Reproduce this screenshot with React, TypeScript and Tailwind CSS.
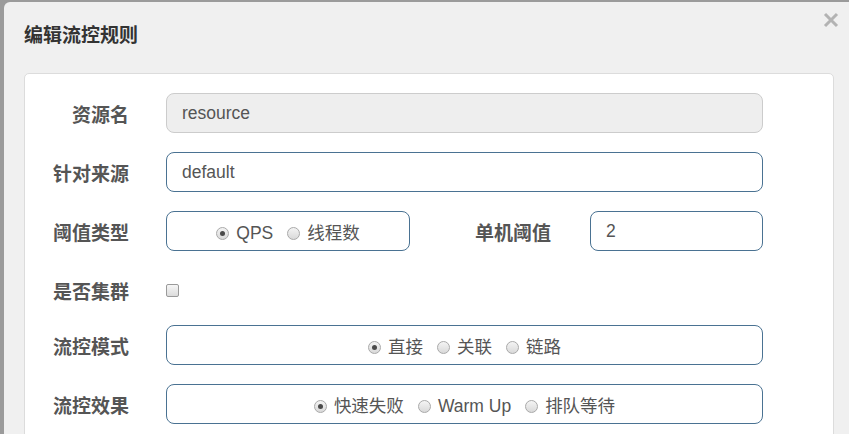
import React from "react";

const FONT = { fontFamily: '"Liberation Sans", Arial, "Noto Sans CJK SC", sans-serif' };

function Radio({ checked, label }: { checked?: boolean; label: string }) {
  return (
    <label className="flex items-center gap-[7px]">
      <span className="w-[13px] h-[13px] rounded-full border border-[#a9a9a9] bg-gradient-to-b from-[#f4f4f4] to-[#d9d9d9] flex items-center justify-center">
        {checked && <span className="w-[5px] h-[5px] rounded-full bg-[#4a4a4a]" />}
      </span>
      <span>{label}</span>
    </label>
  );
}

function Label({ children, className = "" }: { children: React.ReactNode; className?: string }) {
  return (
    <div className={`text-[19px] font-bold text-[#555] text-right pt-[6px] ${className}`}>{children}</div>
  );
}

const boxCls = "h-[40px] rounded-[8px] border border-[#4a7292] bg-white flex items-center text-[17.5px] text-[#555]";

export default function App() {
  return (
    <div className="w-[849px] h-[434px] overflow-hidden bg-[#9b9b9b] pt-[2px] pl-[4px]" style={FONT}>
      <div className="h-[440px] bg-[#f0f0f0] rounded-tl-[6px] relative">
        <div className="h-[71px] pl-[20px] pt-[20px] text-[19px] font-bold text-[#333]">编辑流控规则</div>
        <button className="absolute right-[10px] top-[10px] w-[16px] h-[16px]">
          <svg viewBox="0 0 16 16" className="w-[16px] h-[16px]">
            <path d="M2 2 L14 14 M14 2 L2 14" stroke="#b3b3b3" strokeWidth="3" />
          </svg>
        </button>
        <div className="ml-[20px] w-[810px] h-[380px] bg-white border border-[#dcdcdc] rounded-[5px] pt-[19px]">
          <div className="flex items-center h-[40px]">
            <Label className="w-[104px]">资源名</Label>
            <div className="ml-[37px] w-[597px] h-[40px] rounded-[8px] border border-[#cccccc] bg-[#eeeeee] flex items-center pl-[15px] text-[17.5px] text-[#555]">
              resource
            </div>
          </div>
          <div className="flex items-center h-[40px] mt-[19px]">
            <Label className="w-[104px]">针对来源</Label>
            <div className={`ml-[37px] w-[597px] pl-[15px] ${boxCls}`}>default</div>
          </div>
          <div className="flex items-center h-[40px] mt-[19px]">
            <Label className="w-[104px]">阈值类型</Label>
            <div className={`ml-[37px] w-[244px] justify-center gap-[14px] pt-[5px] ${boxCls} bg-[#fffffa]`}>
              <Radio checked label="QPS" />
              <Radio label="线程数" />
            </div>
            <Label className="w-[141px]">单机阈值</Label>
            <div className={`ml-[39px] w-[173px] pl-[15px] ${boxCls} bg-[#fffffa]`}>2</div>
          </div>
          <div className="flex items-center h-[40px] mt-[19px]">
            <Label className="w-[104px]">是否集群</Label>
            <span className="ml-[37px] w-[13px] h-[13px] rounded-[2px] border border-[#9a9a9a] bg-gradient-to-b from-[#f6f6f6] to-[#dcdcdc]" />
          </div>
          <div className="flex items-center h-[40px] mt-[15px]">
            <Label className="w-[104px]">流控模式</Label>
            <div className={`ml-[37px] w-[597px] justify-center gap-[14px] pt-[5px] ${boxCls} bg-[#fffffa]`}>
              <Radio checked label="直接" />
              <Radio label="关联" />
              <Radio label="链路" />
            </div>
          </div>
          <div className="flex items-center h-[40px] mt-[19px]">
            <Label className="w-[104px]">流控效果</Label>
            <div className={`ml-[37px] w-[597px] justify-center gap-[14px] pt-[5px] ${boxCls} bg-[#f7fcff]`}>
              <Radio checked label="快速失败" />
              <Radio label="Warm Up" />
              <Radio label="排队等待" />
            </div>
          </div>
        </div>
      </div>
    </div>
  );
}
